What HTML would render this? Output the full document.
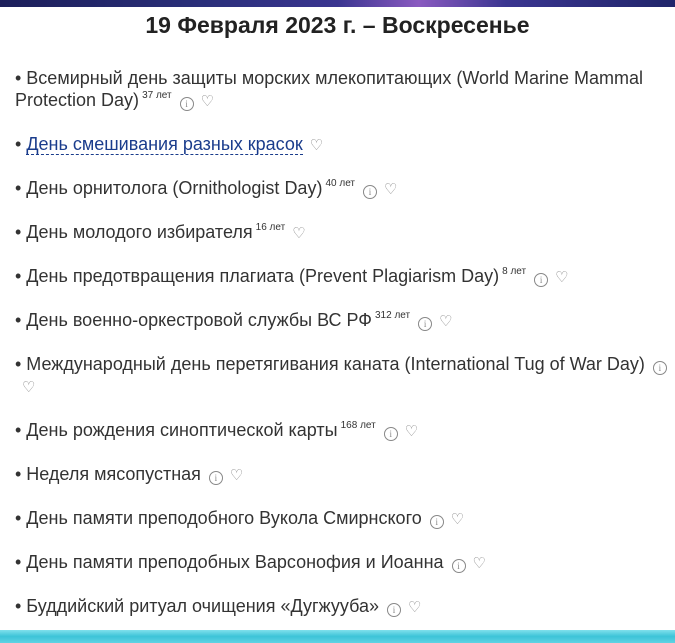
<!DOCTYPE html>
<html><head><meta charset="utf-8"><style>
body{margin:0;width:675px;height:643px;background:#fff;overflow:hidden;font-family:"Liberation Sans",Arial,sans-serif;color:#333;position:relative}
.top{position:absolute;top:0;left:0;width:675px;height:7px;background:linear-gradient(90deg,#1c1f5a,#2a2f7a 30%,#3a3590 50%,#8a5ac0 62%,#3a3590 75%,#20256a)}
.bot{position:absolute;top:630px;left:0;width:675px;height:13px;background:linear-gradient(#7fe0ec,#3cc4d8 50%,#5fd3e3);}
h1{position:absolute;top:11px;left:0;width:675px;text-align:center;margin:0;font-size:23px;font-weight:bold;color:#222;line-height:28px}
.list{position:absolute;top:67px;left:15px;width:655px;font-size:18px;line-height:22px}
.list p{margin:0 0 22px 0;line-height:22px}
sup{font-size:10px;line-height:0;vertical-align:0;position:relative;top:-8px;margin-left:3px}
.i{display:inline-block;width:12px;height:12px;border:1px solid #888;border-radius:50%;font-size:9px;line-height:12px;text-align:center;color:#888;margin-left:8px;vertical-align:-1px;font-family:"Liberation Serif",serif}
.h{color:#888;margin-left:7px;font-size:15px;line-height:0}
a{color:#1a3c8c;text-decoration:none;border-bottom:1px dashed #1a3c8c}
</style></head><body>
<div class="top"></div>
<h1>19 Февраля 2023 г. – Воскресенье</h1>
<div class="list">
<p>• Всемирный день защиты морских млекопитающих (World Marine Mammal Protection Day)<sup>37 лет</sup><span class="i">i</span><span class="h">♡</span></p>
<p>• <a>День смешивания разных красок</a><span class="h">♡</span></p>
<p>• День орнитолога (Ornithologist Day)<sup>40 лет</sup><span class="i">i</span><span class="h">♡</span></p>
<p>• День молодого избирателя<sup>16 лет</sup><span class="h">♡</span></p>
<p>• День предотвращения плагиата (Prevent Plagiarism Day)<sup>8 лет</sup><span class="i">i</span><span class="h">♡</span></p>
<p>• День военно-оркестровой службы ВС РФ<sup>312 лет</sup><span class="i">i</span><span class="h">♡</span></p>
<p>• Международный день перетягивания каната (International Tug of War Day)<span class="i">i</span><br><span class="h">♡</span></p>
<p>• День рождения синоптической карты<sup>168 лет</sup><span class="i">i</span><span class="h">♡</span></p>
<p>• Неделя мясопустная<span class="i">i</span><span class="h">♡</span></p>
<p>• День памяти преподобного Вукола Смирнского<span class="i">i</span><span class="h">♡</span></p>
<p>• День памяти преподобных Варсонофия и Иоанна<span class="i">i</span><span class="h">♡</span></p>
<p>• Буддийский ритуал очищения «Дугжууба»<span class="i">i</span><span class="h">♡</span></p>
</div>
<div class="bot"></div>
</body></html>
